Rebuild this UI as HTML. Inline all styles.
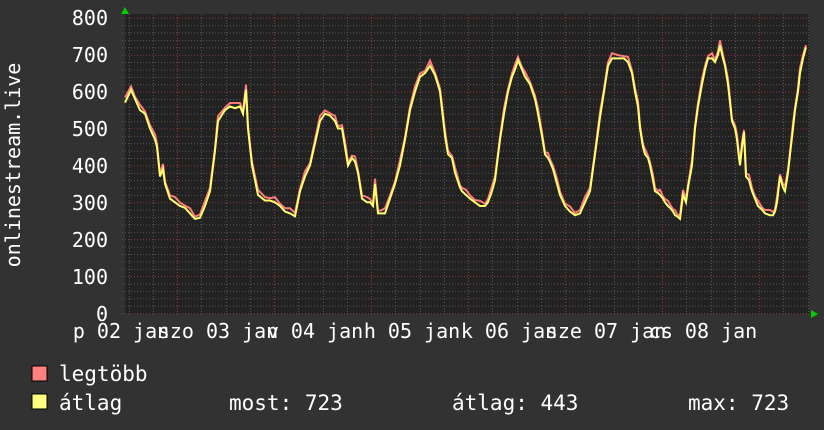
<!DOCTYPE html>
<html><head><meta charset="utf-8"><style>
html,body{margin:0;padding:0;background:#323232;}
svg{display:block;font-family:"DejaVu Sans Mono","Liberation Mono",monospace;}
</style></head><body>
<svg id="g" width="824" height="430" xmlns="http://www.w3.org/2000/svg">
<rect width="824" height="430" fill="#323232"/>
<rect x="125" y="14" width="684" height="300" fill="#222"/>
<g id="grid"></g>
<g fill="#fff" font-size="20" text-anchor="end">
<text x="108" y="25">800</text><text x="108" y="62">700</text><text x="108" y="99">600</text>
<text x="108" y="136">500</text><text x="108" y="173">400</text><text x="108" y="210">300</text>
<text x="108" y="247">200</text><text x="108" y="284">100</text><text x="108" y="321">0</text>
</g>
<text transform="translate(20,165) rotate(-90)" fill="#fff" font-size="20" text-anchor="middle">onlinestream.live</text>
<g fill="#fff" font-size="20" text-anchor="middle">
<text x="121" y="338">p 02 jan</text><text x="218" y="338">szo 03 jan</text>
<text x="315" y="338">v 04 jan</text><text x="412" y="338">h 05 jan</text>
<text x="509" y="338">k 06 jan</text><text x="606" y="338">sze 07 jan</text>
<text x="703" y="338">cs 08 jan</text>
</g>
<path id="red" fill="none" stroke="#ff7b7b" stroke-width="2"/>
<path id="yel" fill="none" stroke="#ffff70" stroke-width="2"/>
<polygon points="121,14 129,14 125,7" fill="#0c0"/>
<polygon points="811,310 811,318 818,314" fill="#0c0"/>
<rect x="32" y="366" width="15" height="15" fill="#ff8080" stroke="#000"/>
<rect x="32" y="394" width="15" height="15" fill="#ffff80" stroke="#000"/>
<g fill="#fff" font-size="21">
<text x="59" y="381">legtöbb</text>
<text x="59" y="410">átlag</text>
<text x="229" y="410">most: 723</text>
<text x="452" y="410">átlag: 443</text>
<text x="688" y="410">max: 723</text>
</g>
</svg>
<script>
var ns="http://www.w3.org/2000/svg",g=document.getElementById("grid");
function ln(x1,y1,x2,y2,c){var l=document.createElementNS(ns,"line");l.setAttribute("x1",x1);l.setAttribute("y1",y1);l.setAttribute("x2",x2);l.setAttribute("y2",y2);l.setAttribute("stroke",c);l.setAttribute("stroke-width",1);l.setAttribute("stroke-dasharray","1,2");g.appendChild(l);}
for(var v=0;v<=800;v+=20){var y=313.5-v*0.369;ln(122,y,809,y,v%100==0?"#8a3a3a":"#555");}
for(var k=-2;k<8;k++){for(var h=0;h<4;h++){var x=Math.round(177+97*k+24.25*h)+0.5;if(x>125&&x<809)ln(x,14,x,316,h==0?"#8a3a3a":"#555");}}
var d=[125,570,131,605,135,580,140,550,145,540,150,500,155,470,157,450,160,370,163,390,165,350,170,310,175,300,180,290,185,285,190,270,195,255,200,258,205,290,210,330,215,440,218,520,225,550,230,560,235,555,240,560,243,540,246,605,248,500,252,400,258,320,265,305,270,305,275,300,280,290,285,275,290,270,295,262,300,330,305,370,310,400,315,460,320,520,325,540,330,535,335,520,338,500,342,500,345,450,348,400,352,420,355,410,358,380,362,310,367,300,370,300,373,290,375,350,378,270,382,270,385,270,390,310,395,350,400,400,405,470,410,550,415,600,420,640,425,650,430,670,435,645,440,600,445,480,448,430,452,420,455,380,460,340,462,330,466,320,470,310,475,300,480,290,485,290,488,300,492,330,495,360,500,470,504,540,508,600,512,640,515,660,518,685,522,660,525,640,530,620,535,580,538,540,542,480,545,430,548,420,550,410,553,390,557,350,560,320,565,290,570,275,575,265,580,270,585,300,590,330,595,430,600,530,604,600,608,670,612,690,618,690,624,690,628,680,632,650,635,600,638,560,640,500,643,450,645,430,648,420,650,400,653,360,655,330,658,325,660,320,663,310,665,300,668,290,670,285,673,275,675,265,677,262,680,255,683,320,686,300,688,340,692,400,695,500,698,560,702,620,705,660,708,690,712,690,715,680,718,700,720,725,723,690,725,670,728,620,732,520,735,500,737,470,739,420,740,400,742,450,744,490,746,370,749,360,752,330,755,310,758,290,762,280,765,270,770,265,773,265,775,275,777,300,780,370,783,340,785,330,788,380,790,430,793,500,795,550,798,600,800,650,803,690,806,720];
var r="",yy="";
for(var i=0;i<d.length;i+=2){var x=d[i],v=d[i+1];var jit=(i%6==0)?14:(i%4==0?6:9);
r+=(i?"L":"M")+x+","+(313-(v+jit)*0.369).toFixed(1);
yy+=(i?"L":"M")+x+","+(313-v*0.369).toFixed(1);}
document.getElementById("red").setAttribute("d",r);
document.getElementById("yel").setAttribute("d",yy);
</script>
</body></html>
